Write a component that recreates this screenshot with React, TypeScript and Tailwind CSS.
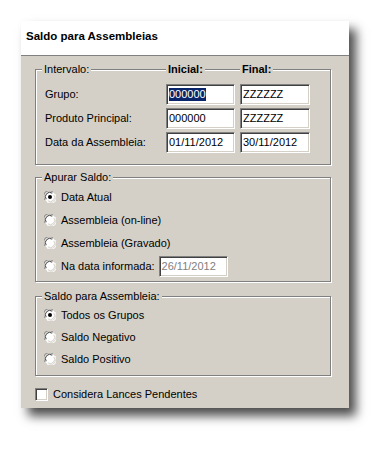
import React from 'react';

const font = "font-['Liberation_Sans',Arial,sans-serif]";

const Radio: React.FC<{ checked?: boolean }> = ({ checked }) => (
  <svg width="12" height="12" viewBox="0 0 12 12" className="shrink-0">
    <circle cx="6" cy="6" r="5.5" fill="#ffffff" />
    <path d="M1.2 9 A5.4 5.4 0 0 1 9 1.2" fill="none" stroke="#808080" strokeWidth="1" />
    <path d="M2.2 8.2 A4.3 4.3 0 0 1 8.2 2.2" fill="none" stroke="#404040" strokeWidth="1" />
    <path d="M10.8 3 A5.4 5.4 0 0 1 3 10.8" fill="none" stroke="#ffffff" strokeWidth="1" />
    <path d="M9.8 3.8 A4.3 4.3 0 0 1 3.8 9.8" fill="none" stroke="#d4d0c8" strokeWidth="1" />
    {checked && <circle cx="6" cy="6" r="2" fill="#000000" />}
  </svg>
);

const RadioRow: React.FC<{ label: string; checked?: boolean; children?: React.ReactNode }> = ({
  label,
  checked,
  children,
}) => (
  <div className="flex items-center h-[22px] pl-[8px]">
    <Radio checked={checked} />
    <span className="ml-[5px]">{label}</span>
    {children}
  </div>
);

const Field: React.FC<{ value: string; selected?: boolean; disabled?: boolean; className?: string }> = ({
  value,
  selected,
  disabled,
  className,
}) => (
  <div
    className={`h-[21px] bg-white border border-t-[#808080] border-l-[#808080] border-b-white border-r-white shadow-[inset_1px_1px_0_#404040,inset_-1px_-1px_0_#d4d0c8] flex items-center pl-[2px] ${className ?? ''}`}
  >
    <span
      className={
        selected
          ? 'bg-[#0a246a] text-white leading-[13px]'
          : disabled
          ? 'text-[#808080]'
          : ''
      }
    >
      {value}
    </span>
  </div>
);

const Legend: React.FC<{ left: number; bold?: boolean; children: React.ReactNode }> = ({ left, bold, children }) => (
  <span
    className={`absolute top-[-8px] bg-[#d4d0c8] px-[2px] leading-[14px] ${bold ? 'font-bold' : ''}`}
    style={{ left }}
  >
    {children}
  </span>
);

const groupBox =
  'relative w-[296px] border border-[#808080] shadow-[1px_1px_0_#ffffff,inset_1px_1px_0_#ffffff]';

export default function App() {
  return (
    <div className={`min-h-[450px] w-[391px] bg-white pt-[21px] pl-[21px] text-[11px] text-black ${font}`}>
      <div className="w-[328px] h-[387px] bg-[#d4d0c8] shadow-[7px_8px_10px_rgba(0,0,0,0.7)] flex flex-col">
        <div className="h-[35px] bg-white border-b border-[#808080] flex items-center pl-[5px] pb-[3px]">
          <span className="font-bold text-[11.5px]">Saldo para Assembleias</span>
        </div>

        <div className="pl-[14px] pt-[13px] flex flex-col">
          <div className={`${groupBox} h-[96px] pt-[14px]`}>
            <Legend left={6}>Intervalo:</Legend>
            <Legend left={130} bold>
              Inicial:
            </Legend>
            <Legend left={204} bold>
              Final:
            </Legend>
            <div className="flex flex-col gap-[3px]">
              {[
                { label: 'Grupo:', a: '000000', b: 'ZZZZZZ', sel: true },
                { label: 'Produto Principal:', a: '000000', b: 'ZZZZZZ' },
                { label: 'Data da Assembleia:', a: '01/11/2012', b: '30/11/2012' },
              ].map((row, i) => (
                <div key={i} className="flex items-center">
                  <span className="w-[130px] pl-[9px]">{row.label}</span>
                  <Field value={row.a} selected={row.sel} className="w-[69px]" />
                  <Field value={row.b} className="w-[70px] ml-[5px]" />
                </div>
              ))}
            </div>
          </div>

          <div className={`${groupBox} h-[105px] mt-[12px] pt-[8px] flex flex-col gap-[1px]`}>
            <Legend left={6}>Apurar Saldo:</Legend>
            <RadioRow label="Data Atual" checked />
            <RadioRow label="Assembleia (on-line)" />
            <RadioRow label="Assembleia (Gravado)" />
            <RadioRow label="Na data informada:">
              <Field value="26/11/2012" disabled className="w-[69px] ml-[4px]" />
            </RadioRow>
          </div>

          <div className={`${groupBox} h-[80px] mt-[14px] pt-[7px] flex flex-col`}>
            <Legend left={6}>Saldo para Assembleia:</Legend>
            <RadioRow label="Todos os Grupos" checked />
            <RadioRow label="Saldo Negativo" />
            <RadioRow label="Saldo Positivo" />
          </div>

          <div className="flex items-center mt-[10px]">
            <div className="w-[13px] h-[13px] bg-white border border-t-[#808080] border-l-[#808080] border-b-white border-r-white shadow-[inset_1px_1px_0_#404040,inset_-1px_-1px_0_#d4d0c8]" />
            <span className="ml-[5px]">Considera Lances Pendentes</span>
          </div>
        </div>
      </div>
    </div>
  );
}
